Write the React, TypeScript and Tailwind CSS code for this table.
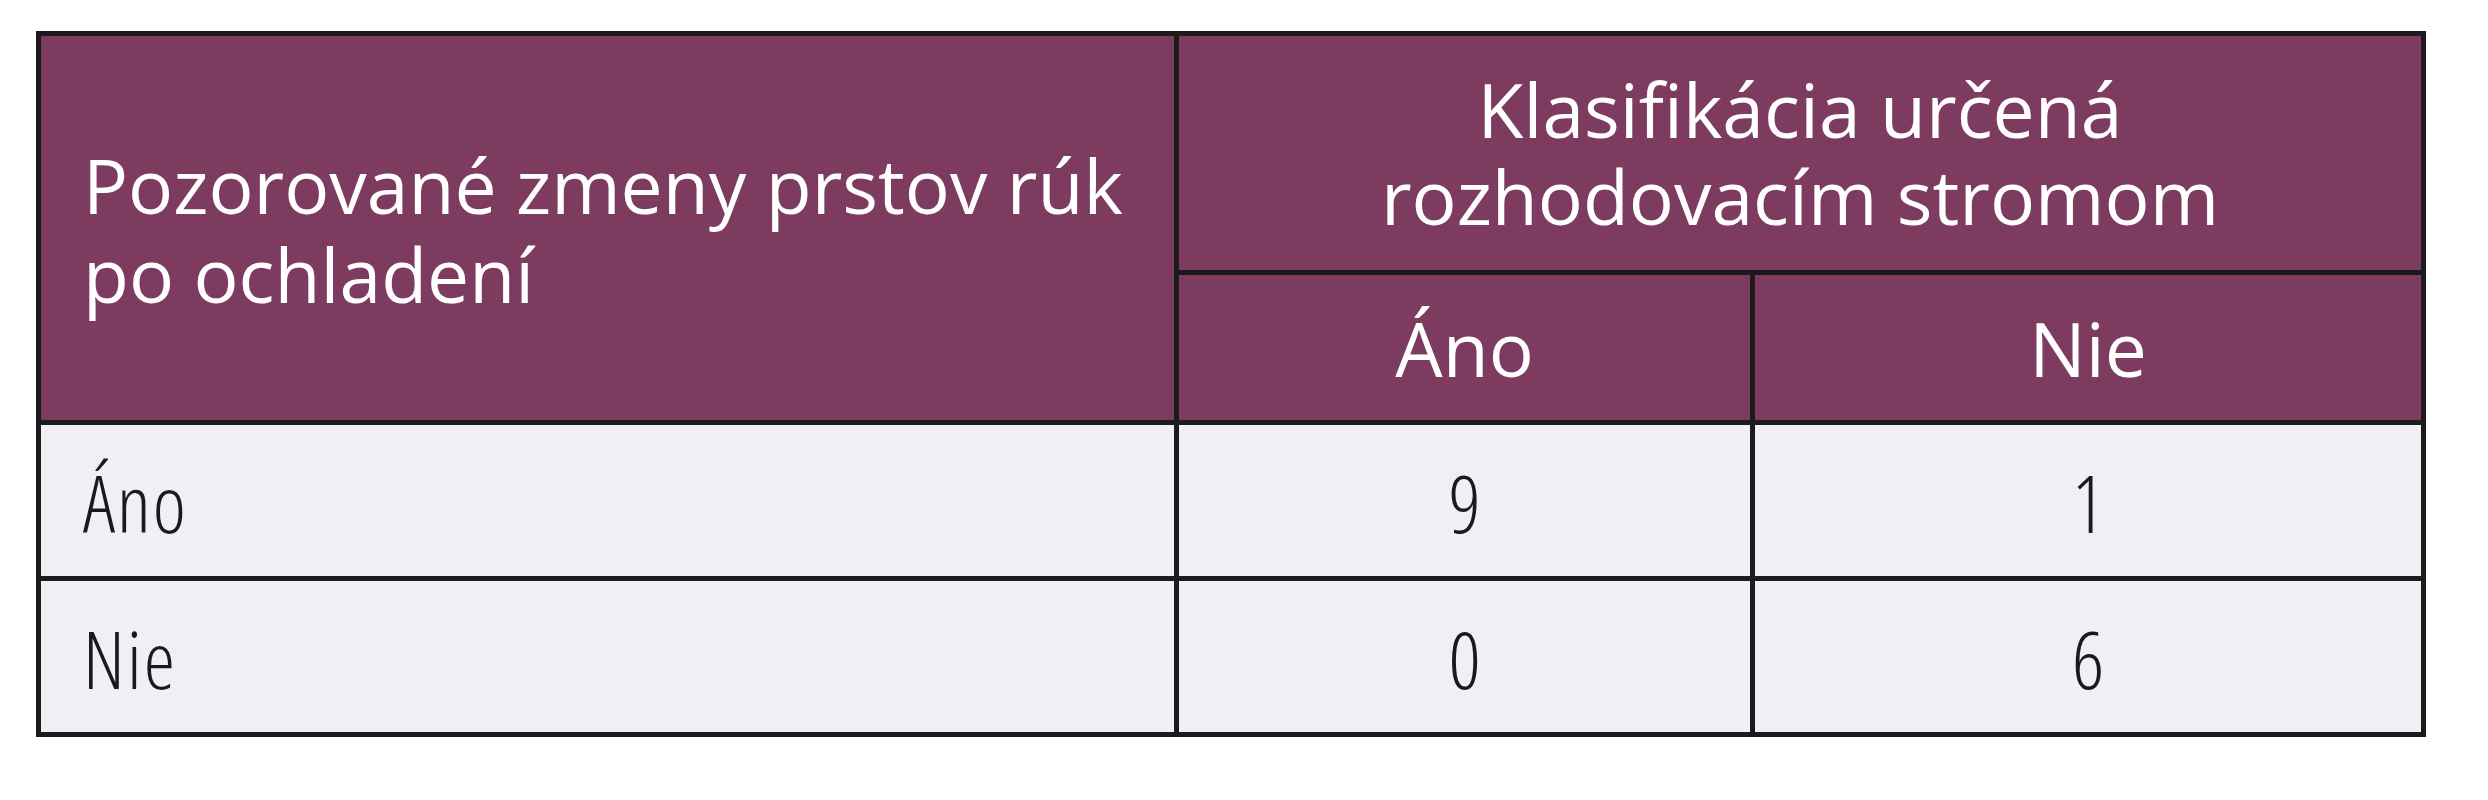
import React from "react";

const font = { fontFamily: '"Open Sans", "Liberation Sans", sans-serif' };

export default function App() {
  return (
    <div className="min-h-[800px] w-[2488px] bg-white pl-[36px] pt-[31px]" style={font}>
      <div className="grid w-[2390px] grid-cols-[1133px_571px_666px] grid-rows-[234px_145px_151px_151px] gap-[5px] bg-[#1c1a1b] p-[5px]">
        <div className="row-span-2 flex items-center bg-[#7d3b60] pl-[42px] pt-[4px] text-[75px] leading-[89px] font-medium text-white">
          <div>
            Pozorované zmeny prstov rúk
            <br />
            po ochladení
          </div>
        </div>
        <div className="col-span-2 flex items-center justify-center bg-[#7d3b60] text-center text-[75px] leading-[87px] font-medium text-white">
          <div>
            Klasifikácia určená
            <br />
            rozhodovacím stromom
          </div>
        </div>
        <div className="flex items-center justify-center bg-[#7d3b60] pt-[2px] text-[75px] font-medium text-white">Áno</div>
        <div className="flex items-center justify-center bg-[#7d3b60] pt-[2px] text-[75px] font-medium text-white">Nie</div>

        <div className="flex items-center bg-[#f0eff5] pl-[42px] pt-[6px] text-[79px] font-light tracking-[2px] text-[#1a1a1a] font-stretch-[86%]">Áno</div>
        <div className="flex items-center justify-center bg-[#f0eff5] pt-[6px] text-[79px] font-light text-[#1a1a1a] font-stretch-[86%]">9</div>
        <div className="flex items-center justify-center bg-[#f0eff5] pt-[6px] text-[79px] font-light text-[#1a1a1a] font-stretch-[86%]">1</div>

        <div className="flex items-center bg-[#f0eff5] pl-[42px] pt-[6px] text-[79px] font-light tracking-[2px] text-[#1a1a1a] font-stretch-[86%]">Nie</div>
        <div className="flex items-center justify-center bg-[#f0eff5] pt-[6px] text-[79px] font-light text-[#1a1a1a] font-stretch-[86%]">0</div>
        <div className="flex items-center justify-center bg-[#f0eff5] pt-[6px] text-[79px] font-light text-[#1a1a1a] font-stretch-[86%]">6</div>
      </div>
    </div>
  );
}
